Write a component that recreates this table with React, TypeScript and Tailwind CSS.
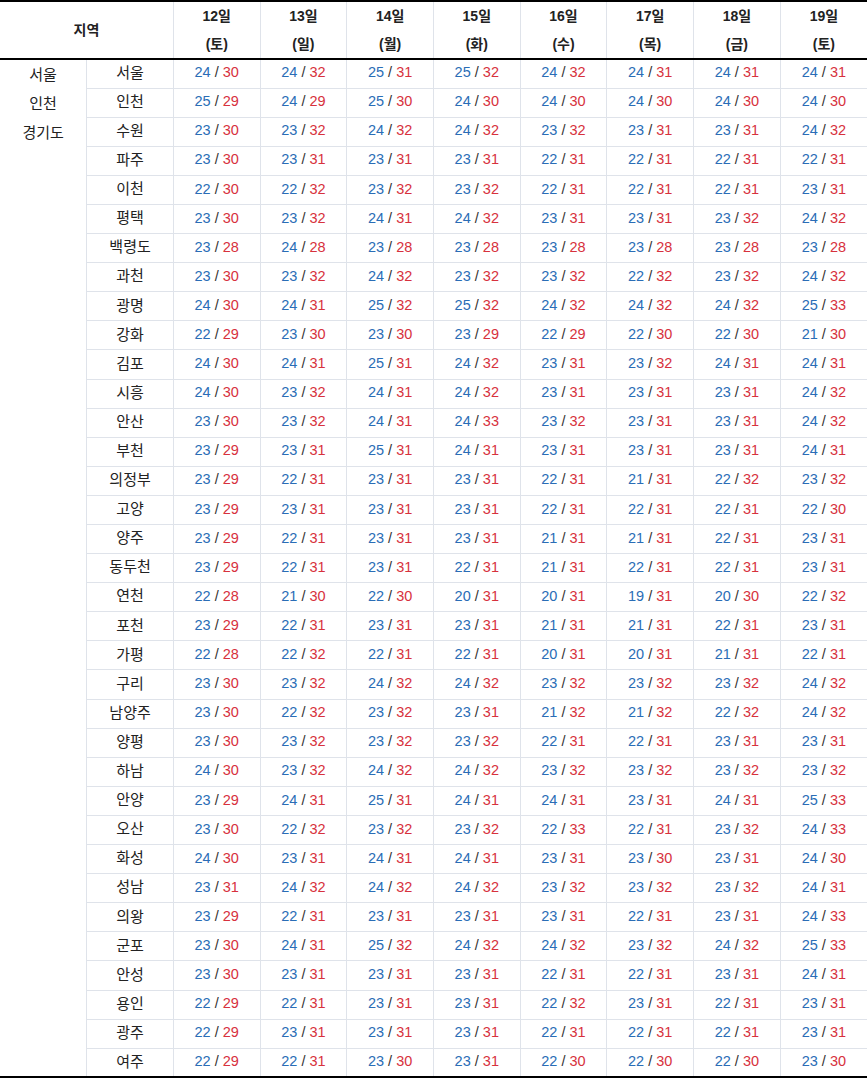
const days = [
  ["12일", "(토)"],
  ["13일", "(일)"],
  ["14일", "(월)"],
  ["15일", "(화)"],
  ["16일", "(수)"],
  ["17일", "(목)"],
  ["18일", "(금)"],
  ["19일", "(토)"],
];

// city: "lo/hi" per day
const rows: [string, string][] = [
  ["서울", "24/30 24/32 25/31 25/32 24/32 24/31 24/31 24/31"],
  ["인천", "25/29 24/29 25/30 24/30 24/30 24/30 24/30 24/30"],
  ["수원", "23/30 23/32 24/32 24/32 23/32 23/31 23/31 24/32"],
  ["파주", "23/30 23/31 23/31 23/31 22/31 22/31 22/31 22/31"],
  ["이천", "22/30 22/32 23/32 23/32 22/31 22/31 22/31 23/31"],
  ["평택", "23/30 23/32 24/31 24/32 23/31 23/31 23/32 24/32"],
  ["백령도", "23/28 24/28 23/28 23/28 23/28 23/28 23/28 23/28"],
  ["과천", "23/30 23/32 24/32 23/32 23/32 22/32 23/32 24/32"],
  ["광명", "24/30 24/31 25/32 25/32 24/32 24/32 24/32 25/33"],
  ["강화", "22/29 23/30 23/30 23/29 22/29 22/30 22/30 21/30"],
  ["김포", "24/30 24/31 25/31 24/32 23/31 23/32 24/31 24/31"],
  ["시흥", "24/30 23/32 24/31 24/32 23/31 23/31 23/31 24/32"],
  ["안산", "23/30 23/32 24/31 24/33 23/32 23/31 23/31 24/32"],
  ["부천", "23/29 23/31 25/31 24/31 23/31 23/31 23/31 24/31"],
  ["의정부", "23/29 22/31 23/31 23/31 22/31 21/31 22/32 23/32"],
  ["고양", "23/29 23/31 23/31 23/31 22/31 22/31 22/31 22/30"],
  ["양주", "23/29 22/31 23/31 23/31 21/31 21/31 22/31 23/31"],
  ["동두천", "23/29 22/31 23/31 22/31 21/31 22/31 22/31 23/31"],
  ["연천", "22/28 21/30 22/30 20/31 20/31 19/31 20/30 22/32"],
  ["포천", "23/29 22/31 23/31 23/31 21/31 21/31 22/31 23/31"],
  ["가평", "22/28 22/32 22/31 22/31 20/31 20/31 21/31 22/31"],
  ["구리", "23/30 23/32 24/32 24/32 23/32 23/32 23/32 24/32"],
  ["남양주", "23/30 22/32 23/32 23/31 21/32 21/32 22/32 24/32"],
  ["양평", "23/30 23/32 23/32 23/32 22/31 22/31 23/31 23/31"],
  ["하남", "24/30 23/32 24/32 24/32 23/32 23/32 23/32 23/32"],
  ["안양", "23/29 24/31 25/31 24/31 24/31 23/31 24/31 25/33"],
  ["오산", "23/30 22/32 23/32 23/32 22/33 22/31 23/32 24/33"],
  ["화성", "24/30 23/31 24/31 24/31 23/31 23/30 23/31 24/30"],
  ["성남", "23/31 24/32 24/32 24/32 23/32 23/32 23/32 24/31"],
  ["의왕", "23/29 22/31 23/31 23/31 23/31 22/31 23/31 24/33"],
  ["군포", "23/30 24/31 25/32 24/32 24/32 23/32 24/32 25/33"],
  ["안성", "23/30 23/31 23/31 23/31 22/31 22/31 23/31 24/31"],
  ["용인", "22/29 22/31 23/31 23/31 22/32 23/31 22/31 23/31"],
  ["광주", "22/29 23/31 23/31 23/31 22/31 22/31 22/31 23/31"],
  ["여주", "22/29 22/31 23/30 23/31 22/30 22/30 22/30 23/30"],
];

function Temp({ value }: { value: string }) {
  const [lo, hi] = value.split("/");
  return (
    <>
      <span className="text-[#2a6db6]">{lo}</span>
      <span className="text-[#333]"> / </span>
      <span className="text-[#d7313d]">{hi}</span>
    </>
  );
}

export default function App() {
  return (
    <div className="w-[868px] bg-white font-['Liberation_Sans','Noto_Sans_CJK_KR',sans-serif] text-[14.5px] text-[#222]">
      <table className="w-[867px] table-fixed border-collapse">
        <colgroup>
          {Array.from({ length: 10 }).map((_, i) => (
            <col key={i} className="w-[86.7px]" />
          ))}
        </colgroup>
        <thead>
          <tr className="h-[56px] border-t-2 border-b-2 border-black">
            <th colSpan={2} className="border-r border-[#dfe3ea] p-0 text-[14px] font-bold">
              지역
            </th>
            {days.map(([d, w]) => (
              <th
                key={d}
                className="border-r border-[#dfe3ea] p-0 text-[14px] font-bold leading-[28px] last:border-r-0"
              >
                {d}
                <br />
                {w}
              </th>
            ))}
          </tr>
        </thead>
        <tbody className="border-b-2 border-black">
          {rows.map(([city, temps], i) => (
            <tr key={city} className="h-[29.1px] border-b border-[#dfe3ea] last:border-b-0">
              {i === 0 && (
                <td
                  rowSpan={rows.length}
                  className="border-r border-[#dfe3ea] p-0 text-center align-top text-[15px] leading-[29.1px]"
                >
                  서울
                  <br />
                  인천
                  <br />
                  경기도
                </td>
              )}
              <td className="border-r border-[#dfe3ea] p-0 pb-[1px] text-center text-[15px]">{city}</td>
              {temps.split(" ").map((t, j) => (
                <td
                  key={j}
                  className="border-r border-[#dfe3ea] p-0 pb-[1px] text-center last:border-r-0"
                >
                  <Temp value={t} />
                </td>
              ))}
            </tr>
          ))}
        </tbody>
      </table>
    </div>
  );
}
